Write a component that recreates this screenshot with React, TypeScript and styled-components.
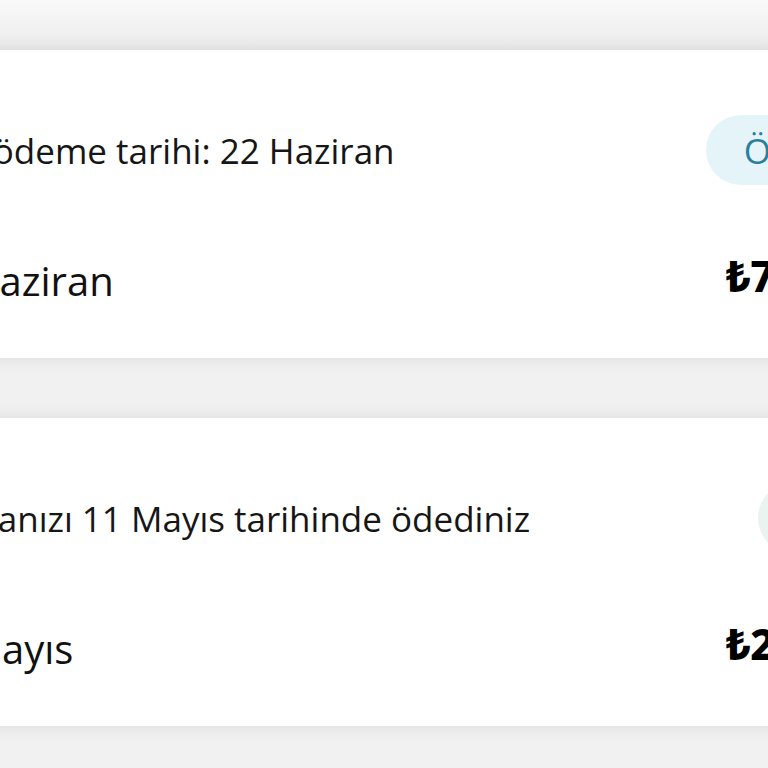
import React from "react";
import styled, { createGlobalStyle } from "styled-components";

const Global = createGlobalStyle`
  html, body { margin: 0; padding: 0; }
  body {
    background: #f1f1f1;
    font-family: "Open Sans", "Noto Sans", "DejaVu Sans", sans-serif;
    color: #1a1a1a;
    overflow: hidden;
  }
`;

const Page = styled.div`
  width: 768px;
  height: 768px;
  overflow: hidden;
  display: flex;
  flex-direction: column;
  gap: 60px;
  padding-top: 50px;
  box-sizing: border-box;
  background: linear-gradient(#f9f9f9, #ececec 50px, #f1f1f1 60px);
`;

const Card = styled.section`
  margin-left: -120px;
  width: 1106px;
  height: 308px;
  flex-shrink: 0;
  box-sizing: border-box;
  background: #ffffff;
  box-shadow: 0 0 18px rgba(0, 0, 0, 0.09);
  padding: 65px 40px 43px;
  display: grid;
  grid-template-rows: 70px 70px;
  row-gap: 60px;
`;

const Row = styled.div`
  display: flex;
  align-items: center;
  justify-content: space-between;
  min-width: 0;
`;

const Subtitle = styled.span<{ $shift: number }>`
  font-size: 35px;
  font-weight: 400;
  white-space: nowrap;
  margin-left: ${(p) => p.$shift}px;
  color: #161616;
`;

const Title = styled.span<{ $shift: number }>`
  font-size: 40px;
  font-weight: 400;
  white-space: nowrap;
  margin-left: ${(p) => p.$shift}px;
  color: #111;
`;

const Badge = styled.span<{ $tone: "blue" | "green" }>`
  height: 70px;
  border-radius: 35px;
  padding: 0 ${(p) => (p.$tone === "blue" ? 38 : 34)}px;
  display: inline-flex;
  align-items: center;
  font-size: 35px;
  white-space: nowrap;
  background: ${(p) => (p.$tone === "blue" ? "#e5f4f9" : "#ebf3f0")};
  color: ${(p) => (p.$tone === "blue" ? "#2a7e9e" : "#2f7a55")};
`;

const Amount = styled.span`
  font-size: 42px;
  font-weight: 800;
  white-space: nowrap;
  color: #000;
  margin-right: 62px;
  padding-bottom: 10px;
  font-family: "Noto Sans", "DejaVu Sans", sans-serif;
`;

type Bill = {
  subtitle: string;
  subShift: number;
  title: string;
  titleShift: number;
  badge: string;
  tone: "blue" | "green";
  amount: string;
};

const bills: Bill[] = [
  {
    subtitle: "Son ödeme tarihi: 22 Haziran",
    subShift: 2,
    title: "Haziran",
    titleShift: 50,
    badge: "Ödenecek",
    tone: "blue",
    amount: "₺789,50",
  },
  {
    subtitle: "Faturanızı 11 Mayıs tarihinde ödediniz",
    subShift: -8,
    title: "Mayıs",
    titleShift: 46,
    badge: "Ödendi",
    tone: "green",
    amount: "₺245,30",
  },
];

export default function App() {
  return (
    <>
      <Global />
      <Page>
        {bills.map((b) => (
          <Card key={b.title}>
            <Row>
              <Subtitle $shift={b.subShift}>{b.subtitle}</Subtitle>
              <Badge $tone={b.tone}>{b.badge}</Badge>
            </Row>
            <Row>
              <Title $shift={b.titleShift}>{b.title}</Title>
              <Amount>{b.amount}</Amount>
            </Row>
          </Card>
        ))}
      </Page>
    </>
  );
}
